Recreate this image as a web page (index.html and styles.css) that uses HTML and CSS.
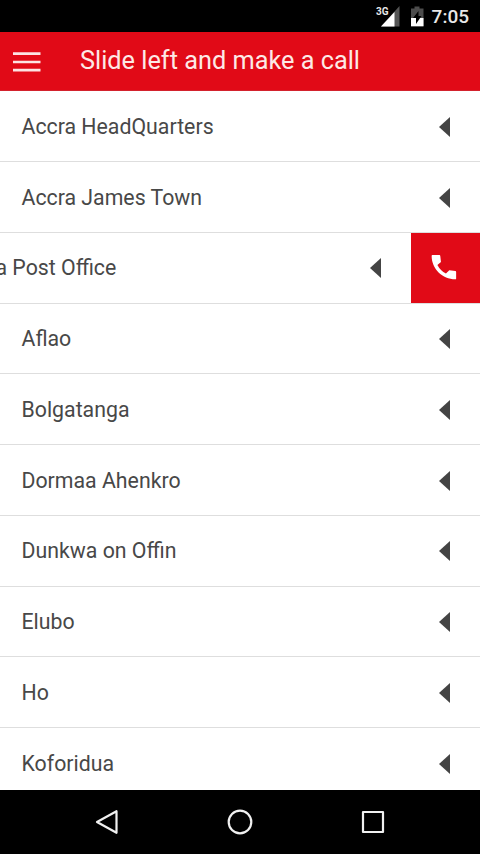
FILE: index.html
```html
<!DOCTYPE html>
<html lang="en">
<head>
<meta charset="utf-8">
<title>Slide left and make a call</title>
<link rel="stylesheet" href="styles.css">
</head>
<body>
<div class="status">
  <svg class="signal" viewBox="0 0 26 24" width="26" height="24"><path d="M7 21.500 25.500 1V21.500Z" fill="#555"/><path d="M7 21.500 20.500 7V21.500Z" fill="#fff"/></svg>
  <span class="network">3G</span>
  <svg class="battery" viewBox="0 0 14 22" width="14" height="22"><path d="M1 2.500h3.500V.500h5v2H13.500v17.800H1Z" fill="#4d4d4d"/><path d="M1 12h12.500v8.300H1Z" fill="#fff"/><path d="M8.500 5v5h3l-5.500 8v-6H3Z" fill="#000"/></svg>
  <span class="clock">7:05</span>
</div>
<header class="bar">
  <svg class="menu" viewBox="0 0 28 20" width="28" height="20"><path d="M0 1.700h27.500M0 10h27.500M0 18.200h27.500" stroke="#fde3e3" stroke-width="2.700"/></svg>
  <h1 class="title">Slide left and make a call</h1>
</header>
<main class="list">
  <div class="row"><span>Accra HeadQuarters</span><i class="arrow"></i></div>
  <div class="row"><span>Accra James Town</span><i class="arrow"></i></div>
  <div class="row row-open"><span>Accra Post Office</span><i class="arrow"></i>
    <div class="call"><svg viewBox="0 0 24 24" width="26" height="26"><path fill="#fff" d="M1.200 1H7.800Q8.500 1 8.600 2L9.200 7.400 5.900 10.200Q8.600 15.400 13.800 18.100L16.900 14.900 22.500 15.700Q23.200 15.900 23.200 16.600V22.800Q23.200 23.300 22.500 23.300C10.500 23.300.6 13.500.6 1.800Q.6 1 1.200 1Z"/></svg></div>
  </div>
  <div class="row"><span>Aflao</span><i class="arrow"></i></div>
  <div class="row"><span>Bolgatanga</span><i class="arrow"></i></div>
  <div class="row"><span>Dormaa Ahenkro</span><i class="arrow"></i></div>
  <div class="row"><span>Dunkwa on Offin</span><i class="arrow"></i></div>
  <div class="row"><span>Elubo</span><i class="arrow"></i></div>
  <div class="row"><span>Ho</span><i class="arrow"></i></div>
  <div class="row"><span>Koforidua</span><i class="arrow"></i></div>
</main>
<nav class="nav">
  <svg viewBox="0 0 28 28" width="28" height="28"><path d="M4 14 23.500 3.200V24.800Z"/></svg>
  <svg viewBox="0 0 28 28" width="28" height="28"><circle cx="14" cy="14" r="11.300"/></svg>
  <svg viewBox="0 0 28 28" width="28" height="28"><rect x="4" y="4" width="20" height="20"/></svg>
</nav>
</body>
</html>
```
FILE: styles.css
```css
* {
  box-sizing: border-box;
}

body {
  margin: 0;
  width: 480px;
  height: 854px;
  display: flex;
  flex-direction: column;
  overflow: hidden;
  background: #fff;
  font-family: Roboto, "Liberation Sans", sans-serif;
}

.status {
  position: relative;
  flex: none;
  height: 32px;
  display: flex;
  align-items: center;
  justify-content: flex-end;
  padding-right: 11px;
  background: #000;
  color: #e8e8e8;
}

.signal {
  margin-right: 10px;
  margin-top: 1px;
}

.network {
  position: absolute;
  left: 376px;
  top: 5px;
  font-size: 10px;
  line-height: 13px;
  font-weight: 700;
}

.battery {
  margin-right: 8px;
  margin-top: 2px;
}

.clock {
  font-size: 19px;
  font-weight: 500;
  line-height: 32px;
  padding-top: 2px;
}

.bar {
  flex: none;
  height: 59px;
  display: flex;
  align-items: center;
  padding-left: 13px;
  background: #e10a17;
  border-bottom: 1px solid #d3222d;
}

.menu {
  margin-right: 39px;
  margin-top: 1px;
}

.title {
  margin: 0;
  font-size: 25.300px;
  font-weight: 400;
  line-height: 54px;
  white-space: nowrap;
  color: #fde9e6;
}

.list {
  flex: 1;
  min-height: 0;
  overflow: hidden;
  padding-top: 0.400px;
}

.row {
  height: 70.750px;
  display: flex;
  align-items: center;
  justify-content: space-between;
  padding: 0 30px 0 21.500px;
  border-bottom: 1px solid #dedede;
  font-size: 21.300px;
  color: #484848;
}

.row-open {
  width: 549px;
  margin-left: -69px;
  padding-right: 0;
}

.row-open .arrow {
  margin-left: auto;
  margin-right: 30px;
}

.call {
  width: 69px;
  height: 100%;
  display: flex;
  align-items: center;
  justify-content: center;
  padding-right: 4px;
  padding-bottom: 2px;
  background: #e10a17;
}

.arrow {
  width: 0;
  height: 0;
  margin-top: 1px;
  border-style: solid;
  border-width: 10.500px 11px 10.500px 0;
  border-color: transparent #444 transparent transparent;
}

.nav {
  flex: none;
  height: 64px;
  display: flex;
  justify-content: center;
  align-items: center;
  gap: 105px;
  background: #000;
}

.nav svg {
  fill: none;
  stroke: #f0f0f0;
  stroke-width: 2.200;
  stroke-linejoin: round;
}
```
